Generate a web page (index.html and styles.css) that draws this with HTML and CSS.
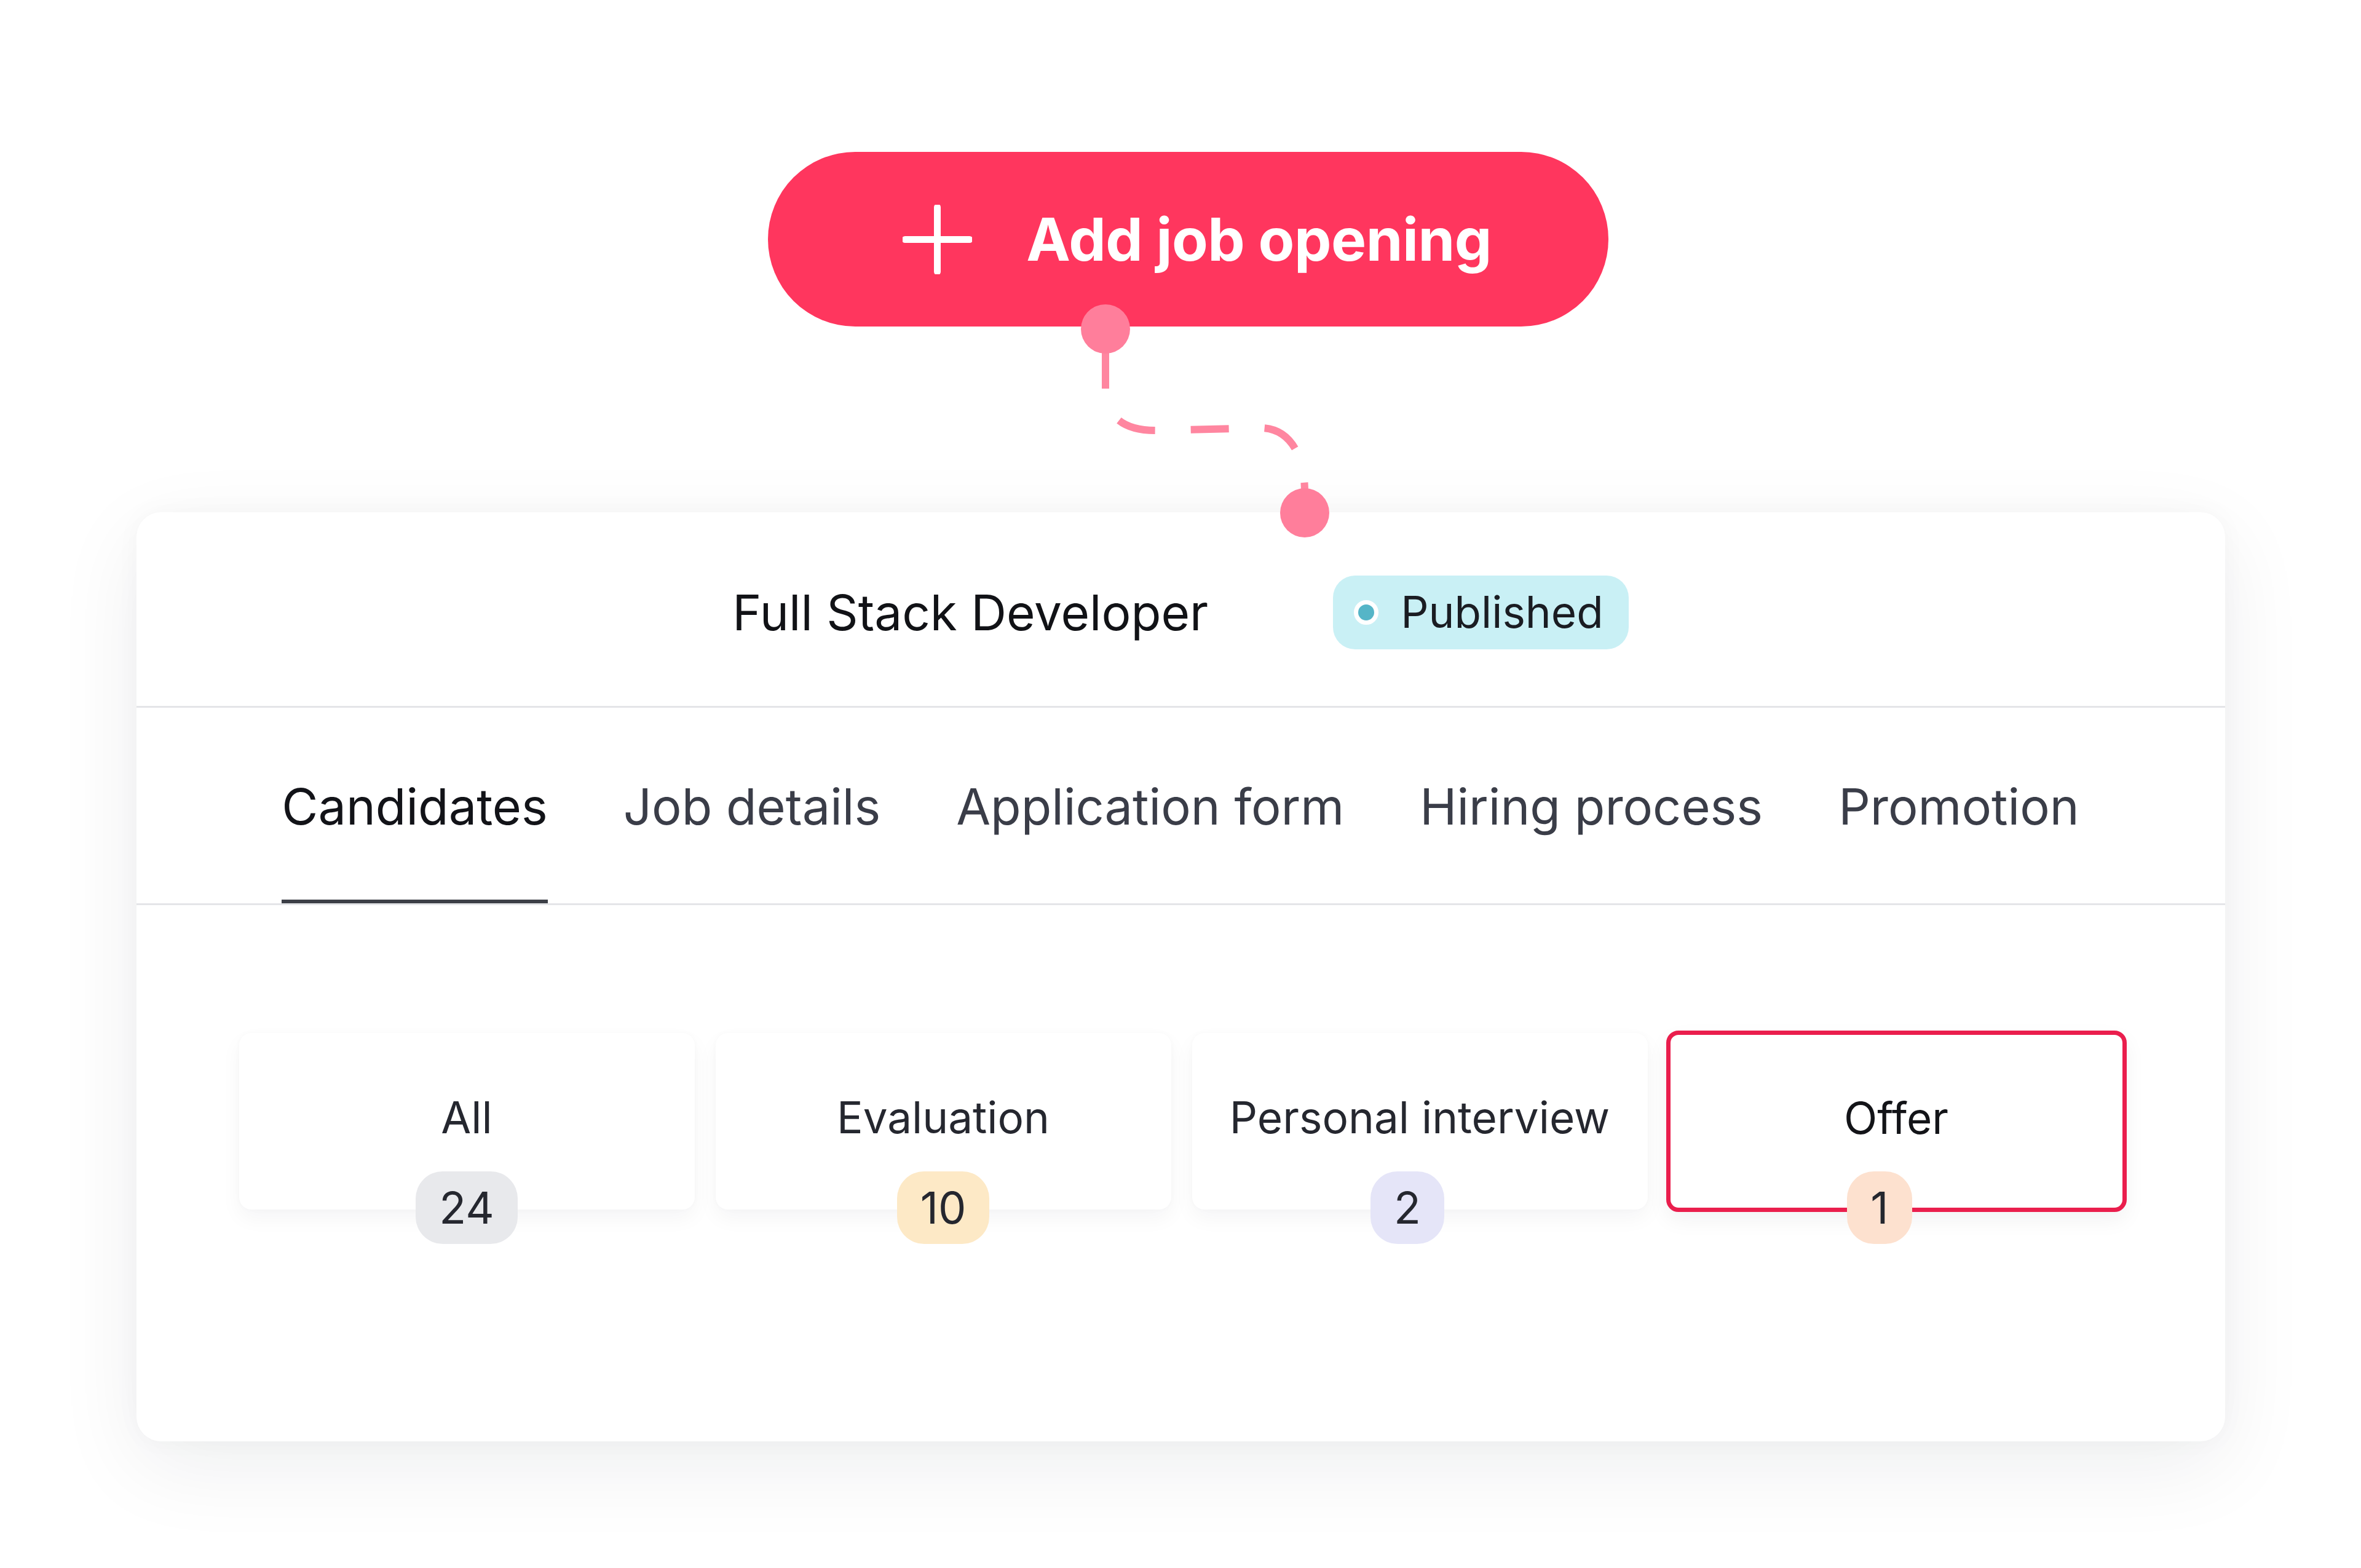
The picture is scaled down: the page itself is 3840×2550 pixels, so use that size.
FILE: index.html
```html
<!DOCTYPE html>
<html lang="en">
<head>
<meta charset="utf-8">
<title>Add job opening</title>
<link rel="stylesheet" href="styles.css">
</head>
<body>
<div class="page">
  <button class="add-btn" type="button">
    <svg class="plus" viewBox="0 0 113 113" width="113" height="113" aria-hidden="true">
      <path d="M56.5 4 V109 M4 56.5 H109" stroke="#fff" stroke-width="11" stroke-linecap="round" fill="none"/>
    </svg>
    <span class="add-label">Add job opening</span>
  </button>

  <svg class="connector" width="3840" height="900" viewBox="0 0 3840 900" aria-hidden="true">
    <path d="M1798 570 V630 C1798 682 1832 700 1880 700 L2050 696 C2092 696 2122 732 2122 800" stroke="#FF86A0" stroke-width="12" fill="none" stroke-dasharray="62 58"/>
    <circle cx="1798" cy="535" r="40" fill="#FF7E9B"/>
    <circle cx="2122" cy="834" r="40" fill="#FF7E9B"/>
  </svg>

  <section class="job-card">
    <header class="job-head">
      <h1 class="job-title">Full Stack Developer</h1>
      <span class="status"><span class="status-dot"></span>Published</span>
    </header>
    <nav class="tabs">
      <a class="tab active">Candidates</a>
      <a class="tab">Job details</a>
      <a class="tab">Application form</a>
      <a class="tab">Hiring process</a>
      <a class="tab">Promotion</a>
    </nav>
    <div class="stages">
      <div class="stage">
        <span class="stage-name">All</span>
        <span class="count count-gray">24</span>
      </div>
      <div class="stage">
        <span class="stage-name">Evaluation</span>
        <span class="count count-yellow">10</span>
      </div>
      <div class="stage">
        <span class="stage-name">Personal interview</span>
        <span class="count count-lavender">2</span>
      </div>
      <div class="stage stage-selected">
        <span class="stage-name">Offer</span>
        <span class="count count-peach">1</span>
      </div>
    </div>
  </section>
</div>
</body>
</html>
```

FILE: styles.css
```css
html, body {
  margin: 0;
  padding: 0;
  background: #ffffff;
}

body {
  width: 3840px;
  height: 2550px;
  overflow: hidden;
  font-family: Inter, "Noto Sans", "Liberation Sans", sans-serif;
}

.page {
  position: relative;
  width: 3840px;
  height: 2550px;
  padding-top: 247px;
  box-sizing: border-box;
  display: flex;
  flex-direction: column;
  align-items: center;
}

.add-btn {
  width: 1367px;
  height: 284px;
  border: 0;
  border-radius: 142px;
  background: #FF365E;
  display: flex;
  align-items: center;
  justify-content: center;
  gap: 88px;
  padding: 0 0 0 30px;
  margin: 0 0 0 24px;
  font-family: inherit;
  cursor: pointer;
}

.plus {
  display: block;
  flex: none;
}

.add-label {
  color: #ffffff;
  font-size: 96px;
  font-weight: 700;
  letter-spacing: -0.5px;
  line-height: 1;
}

.connector {
  position: absolute;
  left: 0;
  top: 0;
  z-index: 2;
  pointer-events: none;
}

.job-card {
  margin-top: 302px;
  width: 3397px;
  height: 1511px;
  background: #ffffff;
  border-radius: 40px;
  box-shadow: 0 40px 140px rgba(20, 24, 40, 0.07), 0 0 40px rgba(20, 24, 40, 0.03);
  display: flex;
  flex-direction: column;
}

.job-head {
  height: 318px;
  box-sizing: border-box;
  border-bottom: 3px solid #E4E5E8;
  display: flex;
  align-items: center;
  justify-content: center;
  gap: 203px;
  padding-top: 10px;
}

.job-title {
  margin: 0;
  font-size: 80px;
  font-weight: 400;
  color: #111216;
  line-height: 1;
}

.status {
  display: flex;
  align-items: center;
  height: 120px;
  box-sizing: border-box;
  padding: 0 41px 0 34px;
  border-radius: 36px;
  background: #C9F0F5;
  color: #1A1C22;
  font-size: 71px;
  line-height: 1;
  gap: 36px;
}

.status-dot {
  width: 40px;
  height: 40px;
  box-sizing: border-box;
  border-radius: 50%;
  background: #55B5C7;
  border: 7px solid #ffffff;
  flex: none;
}

.tabs {
  height: 321px;
  box-sizing: border-box;
  border-bottom: 3px solid #E4E5E8;
  display: flex;
  justify-content: center;
  gap: 123px;
}

.tab {
  display: flex;
  align-items: center;
  box-sizing: border-box;
  height: 100%;
  padding-top: 10px;
  border-bottom: 6px solid transparent;
  font-size: 81px;
  color: #3A3D48;
  line-height: 1;
}

.tab.active {
  color: #121318;
  border-bottom-color: #3C3F47;
}

.stages {
  display: grid;
  grid-template-columns: repeat(4, 1fr);
  gap: 34px;
  padding: 208px 164px 0 167px;
}

.stage {
  height: 287px;
  box-sizing: border-box;
  border: 6px solid transparent;
  border-radius: 20px;
  background: #ffffff;
  box-shadow: 0 14px 34px rgba(20, 24, 40, 0.045), 0 0 10px rgba(20, 24, 40, 0.025);
  display: flex;
  flex-direction: column;
  align-items: center;
  padding-top: 86px;
}

.stage-selected {
  height: 295px;
  margin: -4px;
  padding-top: 90px;
  border-width: 7px;
  border-color: #EA1E4D;
  box-shadow: 0 14px 34px rgba(20, 24, 40, 0.05);
}

.stage-name {
  flex: none;
  font-size: 71px;
  line-height: 90px;
  color: #25272F;
}

.stage-selected .stage-name {
  color: #131418;
}

.count {
  flex: none;
  margin-top: 43px;
  height: 118px;
  box-sizing: border-box;
  padding: 0 38px;
  border-radius: 44px;
  display: flex;
  align-items: center;
  font-size: 72px;
  line-height: 1;
  color: #25272F;
}

.stage-selected .count {
  margin-top: 42px;
}

.count-gray { background: #E8E9EC; }
.count-yellow { background: #FDE9C6; }
.count-lavender { background: #E5E5F8; margin-left: -40px; }
.count-peach { background: #FDE1CF; margin-left: -54px; }
```
